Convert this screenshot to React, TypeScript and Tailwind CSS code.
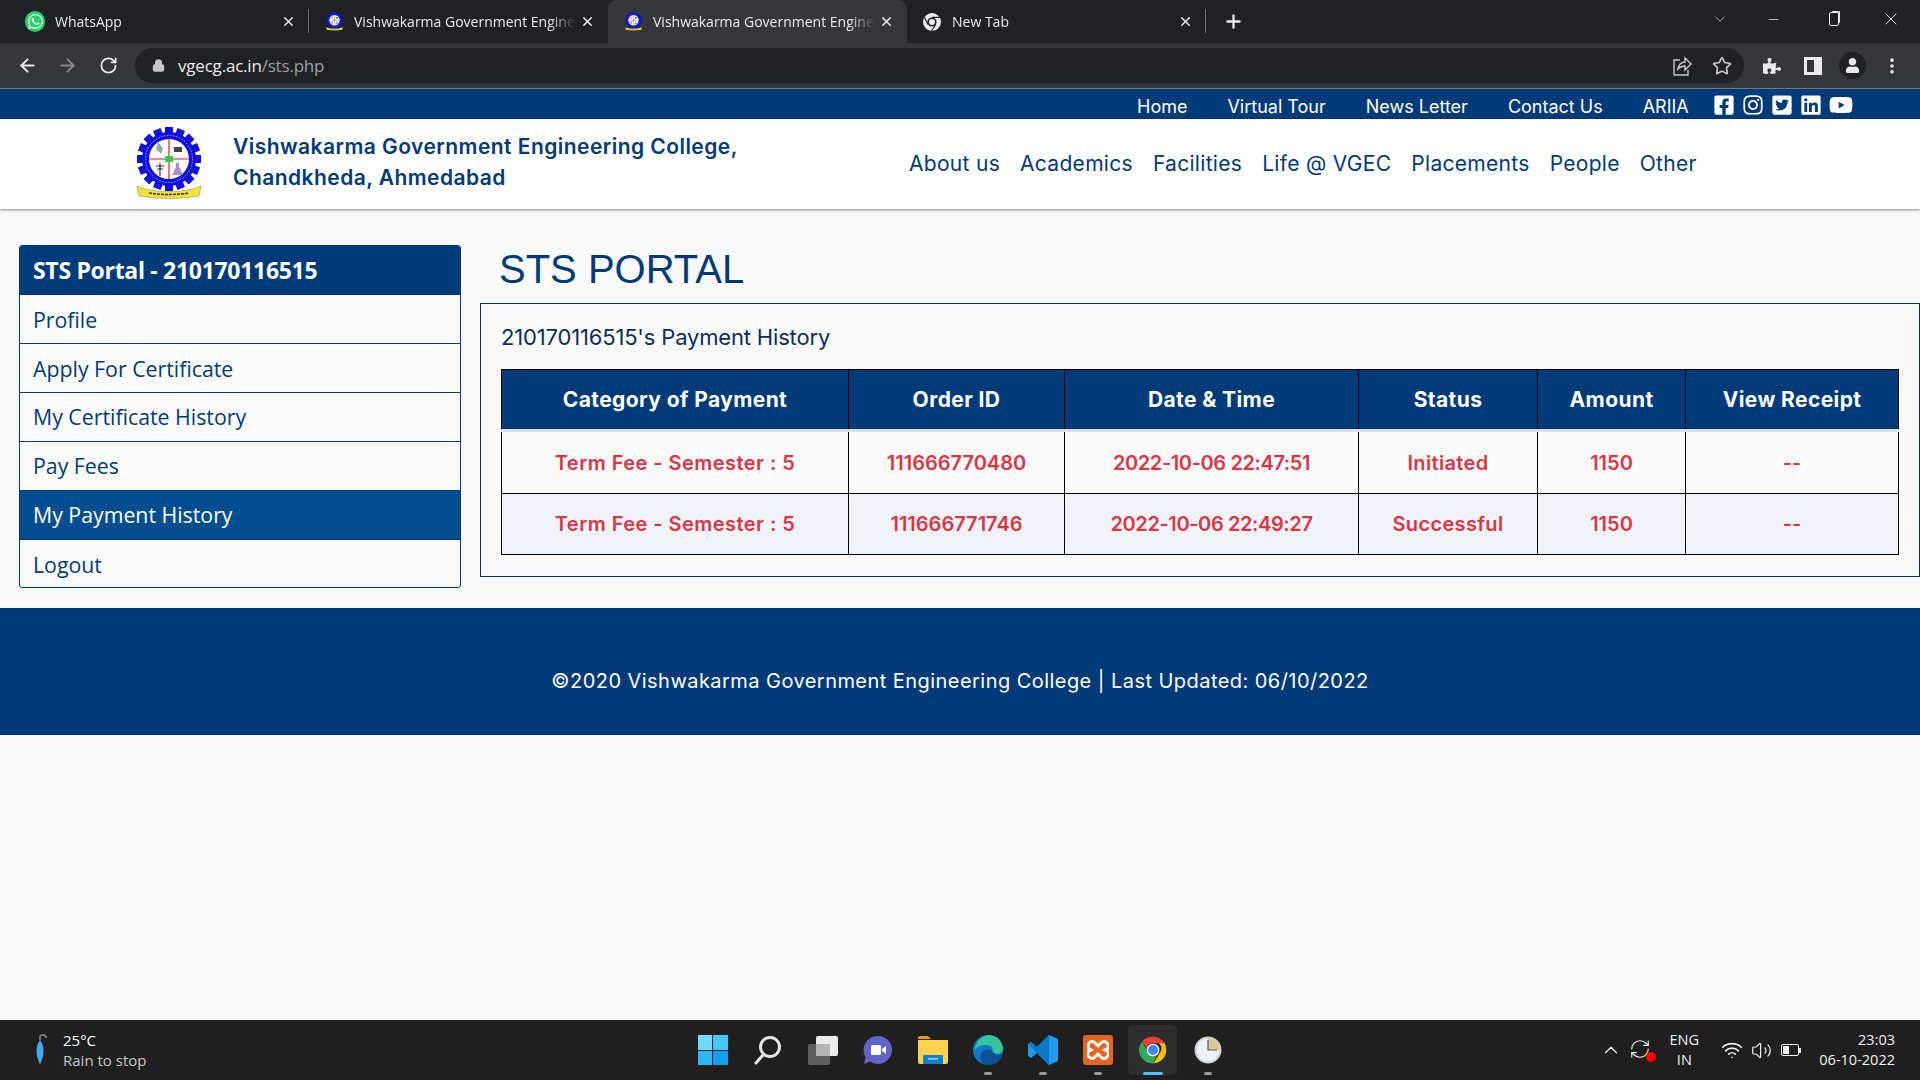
import { ArrowLeft, ArrowRight, RotateCw, RefreshCw, Star, X, Plus, ChevronDown, ChevronUp, Minus, EllipsisVertical, Lock, Volume2, Wifi } from 'lucide-react';
import { FaWhatsapp, FaFacebookSquare, FaInstagram, FaTwitterSquare, FaLinkedin, FaYoutube, FaPuzzlePiece, FaUser } from 'react-icons/fa';

const Logo = ({ size = 66 }: { size?: number }) => (
  <svg width={size} height={size * 72 / 66} viewBox="0 0 66 72">
    {Array.from({ length: 16 }).map((_, i) => (
      <rect key={i} x="29" y="0" width="8" height="10" fill="#0f0fe0" transform={`rotate(${i * 22.5} 33 32)`} />
    ))}
    <circle cx="33" cy="32" r="27" fill="#0f0fe0" />
    <circle cx="33" cy="32" r="23.5" fill="none" stroke="#9db4ff" strokeWidth="1" strokeDasharray="1.5 1.5" />
    <circle cx="33" cy="32" r="20" fill="#fff" />
    <path d="M13 32H53M33 12V52" stroke="#e01b24" strokeWidth="1.2" />
    <path d="M22 15l5 6-2 6-5-5z" fill="#9aa7b5" />
    <path d="M38 20h8v5h-8z" fill="#3b4a42" />
    <rect x="29" y="29" width="8" height="6" fill="#2fd04a" />
    <path d="M24 36v13M20 39h8M21 42h6" stroke="#333" strokeWidth="1.2" />
    <path d="M40 36h3v4l4 8h-11l4-8z" fill="#a78bd8" />
    <path d="M1 59l8 3q24 5 48 0l8-3-2 10q-29 5-60 0z" fill="#f3e23a" stroke="#8a8a20" strokeWidth=".5" />
    <path d="M13 66q20 3 40 0" stroke="#333" strokeWidth="1.5" strokeDasharray="3 1" fill="none" />
  </svg>
);

const ChromeIcon = ({ size = 28 }: { size?: number }) => (
  <svg width={size} height={size} viewBox="0 0 48 48">
    <path d="M24 4a20 20 0 0 1 17.3 10H24a10 10 0 0 0-9.4 6.6L7.6 11.5A20 20 0 0 1 24 4z" fill="#ea4335" />
    <path d="M41.3 14A20 20 0 0 1 25 44l8.2-14.5A10 10 0 0 0 33 14z" fill="#fbbc04" />
    <path d="M7.6 11.5l8.7 15A10 10 0 0 0 29 33l-4 11A20 20 0 0 1 7.6 11.5z" fill="#34a853" />
    <circle cx="24" cy="24" r="9.5" fill="#fff" />
    <circle cx="24" cy="24" r="7.5" fill="#4285f4" />
  </svg>
);

const ChromeGray = () => (
  <svg width="20" height="20" viewBox="0 0 20 20">
    <circle cx="10" cy="10" r="9" fill="#e8eaed" />
    <circle cx="10" cy="10" r="4.6" fill="#202124" />
    <circle cx="10" cy="10" r="3" fill="#e8eaed" />
    <path d="M10 5.4h8M6 12.5L2.5 5.5M13.8 12.5L9.5 19" stroke="#202124" strokeWidth="1.2" />
  </svg>
);

const Tab = ({ title, active, icon, divider }: { title: string; active?: boolean; icon: React.ReactNode; divider?: boolean }) => (
  <div className={`relative w-[299px] h-[43px] flex items-center pl-[15px] pr-[13px] rounded-t-[9px] ${active ? 'bg-[#35363a]' : ''}`}>
    <div className="w-[20px] h-[22px] flex items-center justify-center shrink-0">{icon}</div>
    <div className="ml-[10px] flex-1 text-[14px] text-[#e8eaed] whitespace-nowrap [mask-image:linear-gradient(90deg,#000_88%,transparent)]">{title}</div>
    <X size={15} strokeWidth={2.4} className="ml-[4px] text-[#e8eaed] shrink-0" />
    {divider && <div className="absolute right-0 top-[9px] w-px h-[24px] bg-[#6b6d70]" />}
  </div>
);

const Browser = () => (
  <div className="shrink-0 font-['Open_Sans',sans-serif]">
    <div className="h-[43px] bg-[#202124] flex items-center pl-[10px] pr-[19px]">
      <Tab title="WhatsApp" icon={<span className="w-[21px] h-[21px] rounded-full bg-[#25d366] flex items-center justify-center"><FaWhatsapp size={17} className="text-white" /></span>} divider />
      <Tab title="Vishwakarma Government Engine" icon={<Logo size={17} />} />
      <Tab title="Vishwakarma Government Engine" icon={<Logo size={17} />} active />
      <Tab title="New Tab" icon={<ChromeGray />} divider />
      <Plus size={21} strokeWidth={2.6} className="ml-[17px] text-[#e8eaed]" />
      <div className="flex-1" />
      <div className="flex items-center mb-[5px]">
        <ChevronDown size={18} strokeWidth={1} className="text-[#dadce0]" />
        <Minus size={15} strokeWidth={1.2} className="ml-[37px] text-[#e8eaed]" />
        <span className="ml-[48px] w-[10px] h-[14px] border border-[#e8eaed] rounded-[2px] shadow-[2px_-2px_0_-1px_#e8eaed]" />
        <X size={20} strokeWidth={1.1} className="ml-[42px] text-[#e8eaed]" />
      </div>
    </div>
    <div className="h-[46px] bg-[#35363a] border-b border-[#77787b] flex items-center text-[#e8eaed]">
      <ArrowLeft size={21} strokeWidth={2.2} className="ml-[17px]" />
      <ArrowRight size={21} strokeWidth={2.2} className="ml-[19px] text-[#84868a]" />
      <RotateCw size={19} strokeWidth={2.2} className="ml-[21px]" />
      <div className="ml-[17px] w-[1609px] h-[35px] rounded-full bg-[#202124] flex items-center pl-[17px]">
        <Lock size={13} strokeWidth={3} className="text-[#c4c7c9]" fill="#c4c7c9" />
        <div className="ml-[13px] text-[17px] tracking-[-0.2px]"><span className="text-[#e8eaed]">vgecg.ac.in</span><span className="text-[#9aa0a6]">/sts.php</span></div>
        <div className="flex-1" />
        <svg width="20" height="22" viewBox="0 0 20 22" fill="none" stroke="#c4c7ca" strokeWidth="1.4">
          <path d="M8 5H2v15h14v-5" />
          <path d="M6 14c1-5 4-7 7-7V3l6 6-6 6v-4c-3 0-5 1-7 3z" />
        </svg>
        <Star size={20} strokeWidth={2} className="ml-[20px] mr-[12px] text-[#c4c7ca]" />
      </div>
      <FaPuzzlePiece size={18} className="ml-[19px]" />
      <span className="ml-[23px] w-[18px] h-[18px] border-[3px] border-[#e8eaed] border-r-[8px] block" />
      <span className="ml-[17px] w-[27px] h-[27px] rounded-full bg-[#202124] flex items-center justify-center"><FaUser size={15} /></span>
      <EllipsisVertical size={20} strokeWidth={2.4} className="ml-[16px]" />
    </div>
  </div>
);

const topLinks = ['Home', 'Virtual Tour', 'News Letter', 'Contact Us', 'ARIIA'];
const mainLinks = ['About us', 'Academics', 'Facilities', 'Life @ VGEC', 'Placements', 'People', 'Other'];
const sideLinks = ['Profile', 'Apply For Certificate', 'My Certificate History', 'Pay Fees', 'My Payment History', 'Logout'];

const SiteHeader = () => (
  <div className="relative z-10 shrink-0 font-['Inter',sans-serif]">
    <div className="h-[30px] bg-[#003a78] flex items-center text-white text-[18px] pl-[1137px]">
      <div className="flex gap-[40px] mt-[4px]">
        {topLinks.map((l) => <span key={l}>{l}</span>)}
      </div>
      <div className="ml-[24px] mt-[2px] flex items-center gap-[7px]">
        <FaFacebookSquare size={22} />
        <FaInstagram size={22} />
        <FaTwitterSquare size={22} />
        <FaLinkedin size={22} />
        <FaYoutube size={24} />
      </div>
    </div>
    <div className="h-[90px] bg-white shadow-[0_1px_3px_rgba(0,0,0,0.45)] flex items-center text-[#003a78]">
      <div className="ml-[136px] mt-[-3px]"><Logo /></div>
      <div className="ml-[31px] w-[566px] mt-[-5px] text-[21px] leading-[31px] font-semibold tracking-[0.45px]">
        Vishwakarma Government Engineering College,<br />Chandkheda, Ahmedabad
      </div>
      <div className="ml-[110px] flex gap-[20px] text-[21px] tracking-[0.3px]">
        {mainLinks.map((l) => <span key={l}>{l}</span>)}
      </div>
    </div>
  </div>
);

const Sidebar = () => (
  <div className="w-[442px] h-[343px] ml-[19px] border border-[#003a78] rounded-[3px] overflow-hidden bg-[#fcfcfc] font-['Open_Sans',sans-serif] shrink-0">
    <div className="h-[49px] bg-[#003a78] text-white font-bold text-[23px] tracking-[-0.3px] flex items-center pl-[13px]">STS Portal - 210170116515</div>
    {sideLinks.map((l, i) => (
      <div key={l} className={`h-[49px] flex items-center pl-[13px] text-[21.3px] ${i < 2 ? 'pt-[2px]' : ''} ${i < 5 ? 'border-b border-[#003a78]' : ''} ${l === 'My Payment History' ? 'bg-[#004e8f] text-white' : 'text-[#003a78]'}`}>
        {l}
      </div>
    ))}
  </div>
);

const rows = [
  ['Term Fee - Semester : 5', '111666770480', '2022-10-06 22:47:51', 'Initiated', '1150', '--'],
  ['Term Fee - Semester : 5', '111666771746', '2022-10-06 22:49:27', 'Successful', '1150', '--'],
];
const cellTracking = ['tracking-[0.45px]', '', 'tracking-[-0.4px]', 'tracking-[0.35px]', '', ''];

const PaymentPanel = () => (
  <div className="flex-1 min-w-0">
    <h1 className="h-[58px] pl-[19px] text-[40px] leading-[48px] text-[#003a78] font-['Liberation_Sans',sans-serif]">STS PORTAL</h1>
    <div className="h-[274px] border border-[#003a78] px-[20px] pt-[65px] relative font-['Inter',sans-serif]">
      <div className="absolute left-[20px] top-[18px] text-[22px] leading-[30px] tracking-[-0.17px] text-[#0b2e59]">210170116515's Payment History</div>
      <table className="w-[1398px] table-fixed border-collapse text-center">
        <thead>
          <tr className="h-[61px] bg-[#003a78] text-white text-[21px] tracking-[0.4px] font-bold">
            <th className="w-[347px] border border-black">Category of Payment</th>
            <th className="w-[216px] border border-black">Order ID</th>
            <th className="w-[294px] border border-black">Date &amp; Time</th>
            <th className="w-[179px] border border-black">Status</th>
            <th className="w-[148px] border border-black">Amount</th>
            <th className="border border-black">View Receipt</th>
          </tr>
        </thead>
        <tbody className="text-[#dc3545] text-[20px] font-semibold">
          {rows.map((r, i) => (
            <tr key={r[1]} className={i === 0 ? 'h-[63px] bg-[#fafafa]' : 'h-[61px] bg-[#f0f4f8]'}>
              {r.map((c, j) => (
                <td key={j} className={`border-x border-b border-black ${cellTracking[j]} ${i === 0 ? 'border-t-[3px] border-t-[#dee2e6]' : ''}`}>{c}</td>
              ))}
            </tr>
          ))}
        </tbody>
      </table>
    </div>
  </div>
);

const TaskIcon = ({ children, dot, active }: { children: React.ReactNode; dot?: boolean; active?: boolean }) => (
  <div className="relative w-[55px] h-[50px] flex items-center justify-center">
    {active && <span className="absolute inset-x-[3px] inset-y-0 rounded-[5px] bg-[#2d2d2d]" />}
    <div className="relative">{children}</div>
    {dot && <span className="absolute bottom-0 left-1/2 -translate-x-1/2 w-[8px] h-[3px] rounded-full bg-[#9a9a9a]" />}
    {active && <span className="absolute bottom-0 left-1/2 -translate-x-1/2 w-[20px] h-[3px] rounded-full bg-[#4cc2ff]" />}
  </div>
);

const Taskbar = () => (
  <div className="h-[60px] shrink-0 bg-[#1f1f1f] flex items-center text-white font-['Open_Sans',sans-serif]">
    <div className="flex-1 flex items-center">
      <svg width="14" height="32" viewBox="0 0 14 32" className="ml-[33px]">
        <path d="M7 6V3q0-2 3-2t3 3" stroke="#777" strokeWidth="2" fill="none" />
        <path d="M7 6q5 6 3 16l-3 9-3-9q-2-10 3-16z" fill="#3fa9f5" />
      </svg>
      <div className="ml-[16px] text-[15px] leading-[20px]">
        <div>25°C</div>
        <div className="text-[#c8c8c8]">Rain to stop</div>
      </div>
    </div>
    <div className="flex items-center">
      <TaskIcon>
        <div className="grid grid-cols-2 gap-[1px] w-[30px] h-[30px]">
          <span className="bg-[#6fdcff]" /><span className="bg-[#44c8fb]" /><span className="bg-[#2bb8fb]" /><span className="bg-[#0f9ff5]" />
        </div>
      </TaskIcon>
      <TaskIcon>
        <svg width="28" height="30" viewBox="0 0 28 30" fill="none">
          <circle cx="16" cy="12" r="9.5" stroke="#e4e4e4" strokeWidth="3" />
          <path d="M9 20l-7 8" stroke="#e4e4e4" strokeWidth="3" strokeLinecap="round" />
        </svg>
      </TaskIcon>
      <TaskIcon>
        <svg width="30" height="30" viewBox="0 0 30 30">
          <rect x="0" y="9" width="22" height="21" rx="2" fill="#5f5f5f" />
          <rect x="8" y="1" width="22" height="20" rx="2" fill="#ececec" />
          <rect x="8" y="9" width="14" height="12" fill="#b5b5b5" />
        </svg>
      </TaskIcon>
      <TaskIcon>
        <svg width="30" height="30" viewBox="0 0 30 30">
          <path d="M15 1a14 14 0 1 1-8 25.5L1 29l1.5-7A14 14 0 0 1 15 1z" fill="#6264c8" />
          <rect x="8" y="10" width="10" height="10" rx="1.5" fill="#fff" />
          <path d="M19 14l4-3v8l-4-3z" fill="#fff" />
        </svg>
      </TaskIcon>
      <TaskIcon>
        <svg width="30" height="28" viewBox="0 0 30 28">
          <path d="M0 2q0-2 2-2h8l3 3h-13z" fill="#e3a20d" />
          <path d="M0 4h30v22q0 2-2 2H2q-2 0-2-2z" fill="#fcd34d" />
          <rect x="5" y="19" width="20" height="9" rx="1" fill="#0f7fd1" />
          <rect x="10" y="22" width="10" height="1.5" fill="#9fd5f5" />
        </svg>
      </TaskIcon>
      <TaskIcon dot>
        <svg width="30" height="30" viewBox="0 0 30 30">
          <circle cx="15" cy="15" r="15" fill="#0f78c9" />
          <path d="M2 12Q6 1 16 0q12 1 14 13 0 6-7 6-4 0-3-3 0-6-7-6-8 0-11 5z" fill="#35c4a0" />
          <path d="M10 16q6-4 10 1t10 1q-3 12-15 12Q8 29 7 22q0-3 3-6z" fill="#0a4f96" />
        </svg>
      </TaskIcon>
      <TaskIcon dot>
        <svg width="30" height="30" viewBox="0 0 30 30">
          <path d="M21 0l9 4v22l-9 4-12-12-6 5-3-2v-12l3-2 6 5z" fill="#1f9cf0" />
          <path d="M21 8l-9 7 9 7z" fill="#1f1f1f" />
          <path d="M21 0l-12 12-6-5-3 2 6 6 15 15z" fill="#0a78c8" />
        </svg>
      </TaskIcon>
      <TaskIcon dot>
        <div className="w-[30px] h-[30px] bg-[#e8651f] rounded-[3px] flex items-center justify-center">
          <svg width="22" height="22" viewBox="0 0 22 22" fill="none" stroke="#fff" strokeWidth="3">
            <path d="M2 4q3-3 6 0l3 3 3-3q3-3 6 0t0 6l-2 1 2 1q3 3 0 6t-6 0l-3-3-3 3q-3 3-6 0t0-6l2-1-2-1q-2-3 0-6z" />
          </svg>
        </div>
      </TaskIcon>
      <TaskIcon active><ChromeIcon size={32} /></TaskIcon>
      <TaskIcon dot>
        <svg width="28" height="28" viewBox="0 0 28 28">
          <circle cx="14" cy="14" r="13.5" fill="#c9ced2" />
          <circle cx="14" cy="14" r="11.5" fill="#eef1f3" />
          <path d="M14 14V2.5A11.5 11.5 0 0 1 25.5 14z" fill="#dbc88e" />
          <path d="M14 4v10h9" stroke="#4a5a70" strokeWidth="1.2" fill="none" />
        </svg>
      </TaskIcon>
    </div>
    <div className="flex-1 flex items-center justify-end text-[#f0f0f0]">
      <ChevronUp size={22} strokeWidth={1.3} />
      <div className="relative ml-[7px] w-[24px] h-[24px]">
        <RefreshCw size={22} strokeWidth={1.2} />
        <span className="absolute right-[-3px] bottom-0 w-[10px] h-[10px] rounded-full bg-[#ff0000]" />
      </div>
      <div className="ml-[15px] w-[32px] text-[14.5px] leading-[20px] text-center">ENG<br />IN</div>
      <Wifi size={22} strokeWidth={1.8} className="ml-[21px]" />
      <Volume2 size={21} strokeWidth={1.4} className="ml-[8px]" />
      <div className="ml-[9px] flex items-center">
        <div className="w-[18px] h-[12px] border border-[#f0f0f0] rounded-[2px] p-[1px] flex"><span className="w-[6px] bg-[#f0f0f0]" /></div>
        <span className="w-[2px] h-[5px] bg-[#f0f0f0]" />
      </div>
      <div className="ml-[18px] mr-[25px] text-[14.5px] leading-[20px] text-right">23:03<br />06-10-2022</div>
    </div>
  </div>
);

const App = () => (
  <div className="w-[1920px] h-screen flex flex-col overflow-hidden bg-[#fafafa]">
    <Browser />
    <SiteHeader />
    <div className="flex-1 flex flex-col">
      <div className="flex pt-[36px] h-[399px] gap-[19px]">
        <Sidebar />
        <PaymentPanel />
      </div>
      <div className="h-[127px] pt-[18px] bg-[#003a78] text-white flex items-center justify-center text-[20px] tracking-[0.45px] font-['Inter',sans-serif]">
        ©2020 Vishwakarma Government Engineering College | Last Updated: 06/10/2022
      </div>
    </div>
    <Taskbar />
  </div>
);

export default App;
